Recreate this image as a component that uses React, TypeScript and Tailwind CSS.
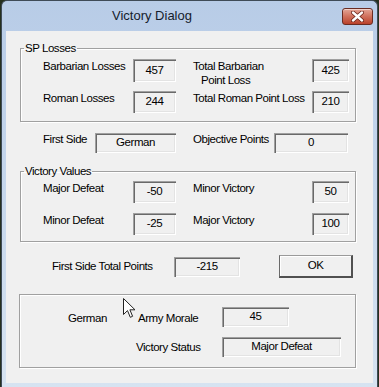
const font = "font-['Liberation_Sans',Arial,sans-serif] text-[11.5px] tracking-[-0.45px] text-black";

function Field({ value, className = "" }: { value: string; className?: string }) {
  return (
    <div
      className={`flex items-center justify-center bg-[#f0f0f0] leading-none shadow-[inset_1px_1px_0_#a0a0a0,inset_2px_2px_0_#696969,inset_-1px_-1px_0_#ffffff,inset_-2px_-2px_0_#e3e3e3] ${className}`}
    >
      {value}
    </div>
  );
}

function Group({ title, children, className = "" }: { title: string; children: React.ReactNode; className?: string }) {
  return (
    <fieldset
      className={`ml-[14px] w-[336px] border border-[#a0a0a0] shadow-[inset_1px_1px_0_#fff,1px_1px_0_#fff] ${className}`}
    >
      <legend className="ml-[3px] px-px leading-[14px]">{title}</legend>
      {children}
    </fieldset>
  );
}

function Cursor() {
  return (
    <svg className="absolute left-[123px] top-[298px]" width="13" height="21" viewBox="0 0 13 21">
      <path
        d="M0.5 0.5 L0.5 16.5 L4.5 12.6 L7.3 19.3 L9.6 18.3 L6.9 11.8 L12 11.8 Z"
        fill="#fff"
        stroke="#222"
        strokeWidth="1"
        strokeLinejoin="miter"
      />
    </svg>
  );
}

export default function App() {
  return (
    <div className={`relative h-[387px] w-[379px] overflow-hidden bg-[#26301f] ${font}`}>
      <div className="ml-px flex h-[387px] w-[377px] flex-col rounded-t-[6px] border border-b-0 border-[#3f4b57] bg-gradient-to-b from-[#b8cce7] via-[#c6d7ec] to-[#d6e3f1]">
        {/* title bar */}
        <div className="flex h-[30px] items-center">
          <span className="ml-[110px] font-['Liberation_Sans',Arial,sans-serif] text-[13px] tracking-normal text-[#151c2c]">
            Victory Dialog
          </span>
          <div className="ml-auto mr-[4px] mt-[1px] flex h-[17px] w-[31px] items-center justify-center rounded-[3px] border border-[#6b2c22] bg-gradient-to-b from-[#e3a597] via-[#d0705c] to-[#b9412b] shadow-[inset_0_1px_0_rgba(255,255,255,0.5)]">
            <svg width="13" height="11" viewBox="0 0 13 11">
              <path d="M2 1.5 L11 9.5 M11 1.5 L2 9.5" stroke="#6a2318" strokeWidth="4" strokeLinecap="round" />
              <path d="M2 1.5 L11 9.5 M11 1.5 L2 9.5" stroke="#fff" strokeWidth="2.4" strokeLinecap="round" />
            </svg>
          </div>
        </div>

        {/* client area */}
        <div className="mx-[4px] h-[352px] bg-[#f0f0f0] pt-[10px]">
          <Group title="SP Losses" className="h-[81px] pt-[4px]">
            <div className="grid grid-cols-[90px_43px_136px_37px] grid-rows-[23px_22px] gap-y-[9px] pl-[22px]">
              <span className="leading-[14px]">Barbarian Losses</span>
              <Field value="457" className="h-[23px]" />
              <span className="flex flex-col pl-[17px] leading-[14px]">
                <span>Total Barbarian</span>
                <span className="pl-2">Point Loss</span>
              </span>
              <Field value="425" className="h-[23px]" />
              <span className="leading-[14px]">Roman Losses</span>
              <Field value="244" className="h-[22px]" />
              <span className="whitespace-nowrap pl-[17px] leading-[14px]">Total Roman Point Loss</span>
              <Field value="210" className="h-[22px]" />
            </div>
          </Group>

          <div className="mt-[10px] flex items-start pl-[37px]">
            <span className="w-[52px] leading-[14px]">First Side</span>
            <Field value="German" className="mt-px h-[20px] w-[81px]" />
            <span className="ml-[17px] w-[81px] leading-[14px]">Objective Points</span>
            <Field value="0" className="mt-px h-[20px] w-[74px]" />
          </div>

          <Group title="Victory Values" className="mt-[11px] h-[78px] pt-[3px]">
            <div className="grid grid-cols-[90px_43px_136px_37px] grid-rows-[22px_22px] gap-y-[10px] pl-[22px]">
              <span className="leading-[14px]">Major Defeat</span>
              <Field value="-50" className="h-[22px]" />
              <span className="pl-[17px] leading-[14px]">Minor Victory</span>
              <Field value="50" className="h-[22px]" />
              <span className="leading-[14px]">Minor Defeat</span>
              <Field value="-25" className="h-[22px]" />
              <span className="pl-[17px] leading-[14px]">Major Victory</span>
              <Field value="100" className="h-[22px]" />
            </div>
          </Group>

          <div className="mt-[13px] flex h-[23px] items-center pl-[46px]">
            <span className="w-[122px]">First Side Total Points</span>
            <Field value="-215" className="h-[20px] w-[66px]" />
            <button className="ml-[39px] flex h-[23px] w-[74px] items-center justify-center border-b-2 border-l border-r-2 border-t border-b-[#505050] border-l-[#6a6a6a] border-r-[#505050] border-t-[#9a9a9a] bg-[#f0f0f0] shadow-[inset_1px_1px_0_#fff] leading-none">
              OK
            </button>
          </div>

          <div className="ml-[13px] mt-[16px] h-[74px] w-[337px] border border-[#a0a0a0] pl-[48px] pt-[12px] shadow-[inset_1px_1px_0_#fff,1px_1px_0_#fff]">
            <div className="grid grid-cols-[70px_84px_auto] grid-rows-[20px_20px] items-center gap-y-[10px]">
              <span className="mt-[4px]">German</span>
              <span className="mt-[4px]">Army Morale</span>
              <Field value="45" className="h-[20px] w-[67px]" />
              <span />
              <span className="-ml-[2px] mt-[2px]">Victory Status</span>
              <Field value="Major Defeat" className="h-[20px] w-[119px]" />
            </div>
          </div>
        </div>
      </div>
      <Cursor />
    </div>
  );
}
